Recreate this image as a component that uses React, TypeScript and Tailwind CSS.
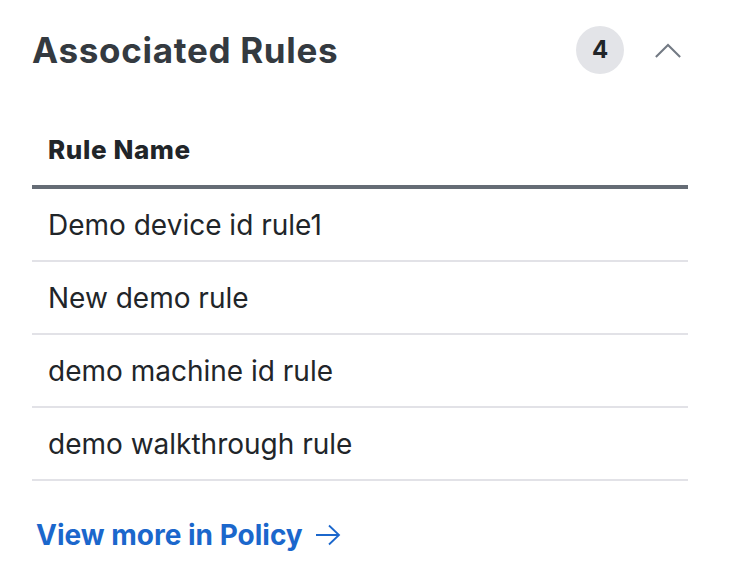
import React from "react";

const rules = [
  "Demo device id rule1",
  "New demo rule",
  "demo machine id rule",
  "demo walkthrough rule",
];

export default function App() {
  return (
    <div
      className="w-[744px] h-[588px] bg-white pl-[32px] pr-[56px] pt-[26px]"
      style={{ fontFamily: "Inter, 'Noto Sans', sans-serif" }}
    >
      <div className="flex items-center h-12">
        <h2 className="flex-1 text-[35px] leading-[40px] font-bold text-[#343a40] tracking-[0.7px]">
          Associated Rules
        </h2>
        <div className="w-12 h-12 rounded-full bg-[#e3e4e8] flex items-center justify-center text-[24px] font-bold text-[#212529]">
          4
        </div>
        <button className="ml-[30px] mr-[6px] w-[28px] h-12 flex items-center justify-center">
          <svg width="30" height="17" viewBox="0 0 30 17" fill="none">
            <path d="M2 15.5 L15 2.5 L28 15.5" stroke="#737a84" strokeWidth="2.2" />
          </svg>
        </button>
      </div>

      <div className="mt-[60px]">
        <div className="pl-4 pb-[19px] text-[26px] leading-[32px] font-extrabold text-[#212529] border-b-4 border-[#656c75] tracking-[0.6px]">
          Rule Name
        </div>
        {rules.map((r) => (
          <div
            key={r}
            className="pl-4 h-[73px] flex items-center text-[28px] text-[#212529] border-b-2 border-[#e2e2e7]"
          >
            {r}
          </div>
        ))}
        <a
          href="#"
          className="mt-[36px] ml-[4px] inline-flex items-center gap-[12px] text-[28px] leading-[36px] font-bold text-[#1b67cc]"
        >
          View more in Policy
          <svg width="26" height="22" viewBox="0 0 26 22" fill="none">
            <path d="M1 11 H24 M14 1.5 L24 11 L14 20.5" stroke="#1b67cc" strokeWidth="1.8" />
          </svg>
        </a>
      </div>
    </div>
  );
}
